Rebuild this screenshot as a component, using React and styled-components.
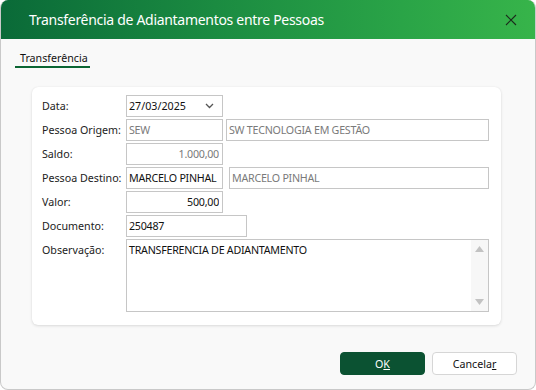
import React, { useState } from "react";
import styled, { createGlobalStyle } from "styled-components";

const GlobalStyle = createGlobalStyle`
  html, body {
    margin: 0;
    padding: 0;
    background: #ffffff;
  }
  body {
    font-family: "Noto Sans", "Open Sans", sans-serif;
    font-size: 10.7px;
    color: #1f1f1f;
  }
`;

const App = () => {
  const [date] = useState("27/03/2025");
  const [obs, setObs] = useState("TRANSFERENCIA DE ADIANTAMENTO");

  return (
    <>
      <GlobalStyle />
      <Window>
        <TitleBar>
          <Title>Transferência de Adiantamentos entre Pessoas</Title>
          <CloseButton aria-label="Fechar">
            <svg width="12" height="12" viewBox="0 0 12 12">
              <path d="M1 1 L11 11 M11 1 L1 11" stroke="#1c2b1c" strokeWidth="1.1" />
            </svg>
          </CloseButton>
        </TitleBar>
        <Body>
          <Tabs>
            <Tab active>Transferência</Tab>
          </Tabs>
          <Card>
            <Row>
              <Label>Data:</Label>
              <SelectBox>
                <span>{date}</span>
                <svg width="9" height="6" viewBox="0 0 9 6">
                  <path d="M1 1 L4.5 4.5 L8 1" fill="none" stroke="#555" strokeWidth="1.3" />
                </svg>
              </SelectBox>
            </Row>
            <Row>
              <Label>Pessoa Origem:</Label>
              <Input $w={97} $disabled value="SEW" readOnly />
              <Input $w={264} $ml={3} $disabled value="SW TECNOLOGIA EM GESTÃO" readOnly />
            </Row>
            <Row>
              <Label>Saldo:</Label>
              <Input $w={97} $disabled $right value="1.000,00" readOnly />
            </Row>
            <Row>
              <Label>Pessoa Destino:</Label>
              <Input $w={97} value="MARCELO PINHAL" readOnly />
              <Input $w={263} $ml={6} $disabled value="MARCELO PINHAL" readOnly />
            </Row>
            <Row>
              <Label>Valor:</Label>
              <Input $w={97} $right value="500,00" readOnly />
            </Row>
            <Row>
              <Label>Documento:</Label>
              <Input $w={121} value="250487" readOnly />
            </Row>
            <Row $top>
              <Label $pt={4}>Observação:</Label>
              <AreaWrap>
                <TextArea value={obs} onChange={(e) => setObs(e.target.value)} />
                <ScrollBar>
                  <svg width="9" height="6" viewBox="0 0 9 6">
                    <path d="M0 6 L4.5 0 L9 6 Z" fill="#c2c2c2" />
                  </svg>
                  <svg width="9" height="6" viewBox="0 0 9 6">
                    <path d="M0 0 L4.5 6 L9 0 Z" fill="#c2c2c2" />
                  </svg>
                </ScrollBar>
              </AreaWrap>
            </Row>
          </Card>
          <Footer>
            <Button primary>
              O<u>K</u>
            </Button>
            <Button>
              Cancela<u>r</u>
            </Button>
          </Footer>
        </Body>
      </Window>
    </>
  );
};

export default App;

const Window = styled.div`
  width: 536px;
  height: 390px;
  box-sizing: border-box;
  border-radius: 8px;
  overflow: hidden;
  background: #f9f9f9;
  border: 1px solid #c9c9c9;
  border-top: none;
  display: flex;
  flex-direction: column;
`;

const TitleBar = styled.div`
  height: 39px;
  flex-shrink: 0;
  display: flex;
  align-items: center;
  justify-content: space-between;
  padding: 0 18px 0 28px;
  background: linear-gradient(90deg, #0a6a38 0%, #1b8b41 40%, #2aa447 75%, #37b44a 100%);
`;

const Title = styled.div`
  color: #ffffff;
  font-size: 14px;
  letter-spacing: -0.3px;
`;

const CloseButton = styled.div`
  width: 12px;
  height: 12px;
  display: flex;
`;

const Body = styled.div`
  flex: 1;
  display: flex;
  flex-direction: column;
  padding: 8px 18px 0 14px;
`;

const Tabs = styled.div`
  display: flex;
  height: 21px;
`;

const Tab = styled.div`
  padding: 4px 5px 0 5px;
  width: 65px;
  height: 15px;
  color: #111;
  border-bottom: 2px solid ${(p) => (p.active ? "#0b6533" : "transparent")};
`;

const Card = styled.div`
  margin: 19px 0 0 17px;
  width: 469px;
  height: 238px;
  box-sizing: border-box;
  background: #ffffff;
  border-radius: 6px;
  box-shadow: 0 1px 3px rgba(0, 0, 0, 0.12), 0 0 1px rgba(0, 0, 0, 0.08);
  padding: 8px 12px 0 10px;
  display: flex;
  flex-direction: column;
  gap: 2px;
`;

const Row = styled.div`
  display: flex;
  align-items: ${(p) => (p.$top ? "flex-start" : "center")};
  height: ${(p) => (p.$top ? "auto" : "22px")};
`;

const Label = styled.div`
  width: 84px;
  flex-shrink: 0;
  padding-top: ${(p) => p.$pt || 0}px;
  color: #222;
  white-space: nowrap;
`;

const Input = styled.input`
  box-sizing: border-box;
  width: ${(p) => p.$w}px;
  height: 22px;
  margin-left: ${(p) => p.$ml || 0}px;
  padding: 0 3px 0 2px;
  border: 1px solid #c6c6c6;
  border-radius: 0;
  outline: none;
  font-family: inherit;
  font-size: 10.7px;
  letter-spacing: -0.25px;
  text-align: ${(p) => (p.$right ? "right" : "left")};
  color: ${(p) => (p.$disabled ? "#7a7a7a" : "#111")};
  background: #ffffff;
`;

const SelectBox = styled.div`
  box-sizing: border-box;
  width: 97px;
  height: 22px;
  border: 1px solid #c6c6c6;
  display: flex;
  align-items: center;
  justify-content: space-between;
  padding: 0 8px 0 2px;
  color: #111;
`;

const AreaWrap = styled.div`
  box-sizing: border-box;
  width: 364px;
  height: 73px;
  border: 1px solid #c6c6c6;
  display: flex;
`;

const TextArea = styled.textarea`
  flex: 1;
  border: none;
  outline: none;
  resize: none;
  padding: 3px 2px;
  font-family: inherit;
  font-size: 10.7px;
  letter-spacing: -0.25px;
  color: #111;
  overflow: hidden;
`;

const ScrollBar = styled.div`
  width: 17px;
  background: #f7f7f7;
  display: flex;
  flex-direction: column;
  align-items: center;
  justify-content: space-between;
  padding: 6px 0 6px;
`;

const Footer = styled.div`
  margin-top: auto;
  display: flex;
  justify-content: flex-end;
  gap: 7px;
  padding-bottom: 14px;
`;

const Button = styled.button`
  width: 85px;
  height: 23px;
  border-radius: 4px;
  font-family: inherit;
  font-size: 10.7px;
  cursor: pointer;
  background: ${(p) => (p.primary ? "#0b5232" : "#ffffff")};
  color: ${(p) => (p.primary ? "#ffffff" : "#111")};
  border: 1px solid ${(p) => (p.primary ? "#0b5232" : "#d6d6d6")};
  u {
    text-decoration: underline;
  }
`;
